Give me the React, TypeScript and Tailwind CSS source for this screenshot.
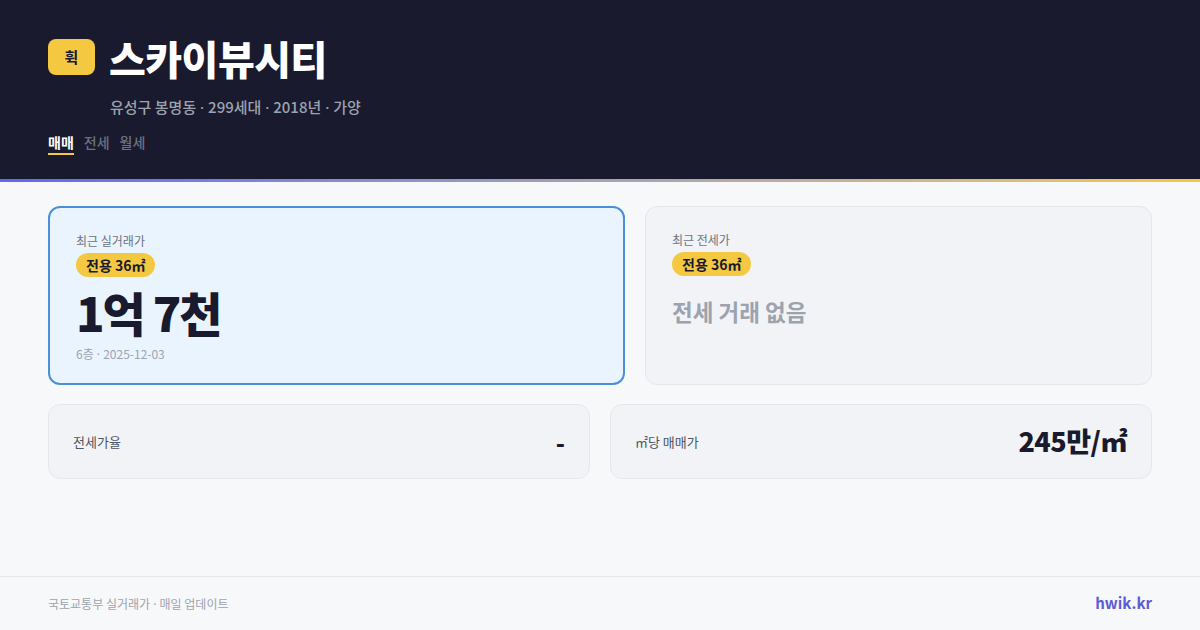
import React from "react";

const font = { fontFamily: '"Noto Sans CJK KR", "Noto Sans", sans-serif' };

function Dot() {
  return <span className="font-['Noto_Sans']"> · </span>;
}

export default function App() {
  return (
    <div className="w-[1200px] h-[630px] bg-[#f7f8fa] flex flex-col overflow-hidden" style={font}>
      <header className="bg-[#1a1a2e] h-[179px] px-12 pt-[39px] flex flex-col">
        <div className="flex items-center gap-[14px] h-[36px]">
          <div className="w-[47px] h-[36px] rounded-[8px] bg-[#f5c842] flex items-center justify-center text-[15px] font-bold text-[#1a1a2e]">
            휙
          </div>
          <div className="text-[40px] font-black text-white leading-none tracking-[-0.5px] mt-[2px]">스카이뷰시티</div>
        </div>
        <div className="ml-[62px] mt-[22px] text-[15px] font-medium text-[#9ca3af] leading-[20px]">
          유성구 봉명동<Dot />299세대<Dot />2018년<Dot />가양
        </div>
        <div className="flex gap-[10px] mt-[15px] text-[14px] leading-[20px]">
          <div className="flex flex-col">
            <span className="text-white font-bold">매매</span>
            <span className="h-[2px] bg-[#f5c842] mt-[1px]" />
          </div>
          <span className="text-[#6b7280] font-medium">전세</span>
          <span className="text-[#6b7280] font-medium">월세</span>
        </div>
      </header>
      <div className="h-[3px] bg-gradient-to-r from-[#6366f1] to-[#f5c842]" />
      <main className="flex-1 px-12 pt-[24px] flex flex-col gap-[19px]">
        <div className="flex gap-5 h-[179px]">
          <div className="w-[577px] rounded-[12px] border-2 border-[#4a90d9] bg-[#eaf4ff] px-[26px] pt-[24px] flex flex-col">
            <div className="text-[12px] text-[#6b7280] leading-[18px]">최근 실거래가</div>
            <div className="mt-[3px] self-start h-[24px] px-[10px] rounded-full bg-[#f5c842] text-[14px] font-bold text-[#1a1a2e] flex items-center">
              전용 36㎡
            </div>
            <div className="mt-[8px] text-[47px] font-black text-[#1a1a2e] leading-[54px] tracking-[-2px]">1억 7천</div>
            <div className="mt-[6px] text-[12px] text-[#9ca3af] leading-[18px]">6층<Dot />2025-12-03</div>
          </div>
          <div className="flex-1 rounded-[12px] border border-[#e5e7eb] bg-[#f1f3f6] px-[26px] pt-[24px] flex flex-col">
            <div className="text-[12px] text-[#6b7280] leading-[18px]">최근 전세가</div>
            <div className="mt-[3px] self-start h-[24px] px-[10px] rounded-full bg-[#f5c842] text-[14px] font-bold text-[#1a1a2e] flex items-center">
              전용 36㎡
            </div>
            <div className="mt-[20px] text-[22.5px] font-bold text-[#9ca3af] leading-[30px]">전세 거래 없음</div>
          </div>
        </div>
        <div className="flex gap-5 h-[75px]">
          <div className="flex-1 rounded-[12px] border border-[#e5e7eb] bg-[#f1f3f6] px-6 flex items-center justify-between">
            <span className="text-[13px] text-[#4b5563]">전세가율</span>
            <span className="text-[24px] font-black text-[#1a1a2e]">-</span>
          </div>
          <div className="flex-1 rounded-[12px] border border-[#e5e7eb] bg-[#f1f3f6] px-6 flex items-center justify-between">
            <span className="text-[13px] text-[#4b5563]">㎡당 매매가</span>
            <span className="text-[27px] font-black text-[#1a1a2e] tracking-[-0.5px]">245만/㎡</span>
          </div>
        </div>
      </main>
      <footer className="h-[54px] border-t border-[#e5e7eb] px-12 flex items-center justify-between">
        <span className="text-[12px] text-[#9ca3af] mt-[1px]">국토교통부 실거래가<Dot />매일 업데이트</span>
        <span className="text-[15px] font-bold text-[#5b5bd6]">hwik.kr</span>
      </footer>
    </div>
  );
}
